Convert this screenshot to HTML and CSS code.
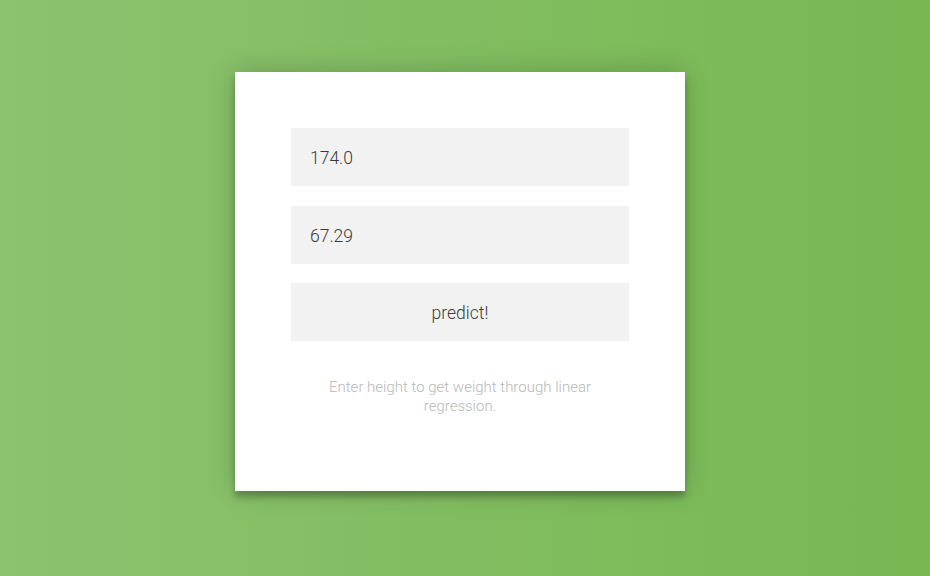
FILE: index.html
```
<!DOCTYPE html>
<html>
<head>
<meta charset="utf-8">
<link rel="stylesheet" href="styles.css">
</head>
<body>
<div class="page">
  <form class="form">
    <input class="field" type="text" value="174.0">
    <input class="field" type="text" value="67.29">
    <button class="btn" type="button">predict!</button>
    <p class="message">Enter height to get weight through linear regression.</p>
  </form>
</div>
</body>
</html>
```
FILE: styles.css
```
html, body {
  margin: 0;
  height: 100%;
}
body {
  background: linear-gradient(to left, #76b852, #8dc26f);
  font-family: Roboto, "Liberation Sans", sans-serif;
  padding-right: 10px;
  box-sizing: border-box;
}
.page {
  width: 450px;
  margin: 0 auto;
  padding-top: 72px;
}
.form {
  background: #fff;
  padding: 56px 56px 75px;
  margin: 0;
  text-align: center;
  box-shadow: 0 0 25px 0 rgba(0,0,0,0.2), 0 6px 6px 0 rgba(0,0,0,0.24);
  display: flex;
  flex-direction: column;
}
.field, .btn {
  display: block;
  font-family: Roboto, "Liberation Sans", sans-serif;
  font-weight: 300;
  font-size: 17.5px;
  line-height: 20px;
  color: #3a3a3a;
  background: #f2f2f2;
  border: 0;
  outline: 0;
  width: 100%;
  box-sizing: border-box;
  height: 58px;
  padding: 1px 19px 0;
  margin: 0 0 19px;
}
.field:nth-child(1) { margin-bottom: 20px; }
.btn {
  text-align: center;
  cursor: pointer;
  margin-bottom: 0;
}
.message {
  margin: 37px 0 0;
  color: #b8b8b8;
  font-weight: 300;
  font-size: 15px;
  line-height: 19px;
}
```
